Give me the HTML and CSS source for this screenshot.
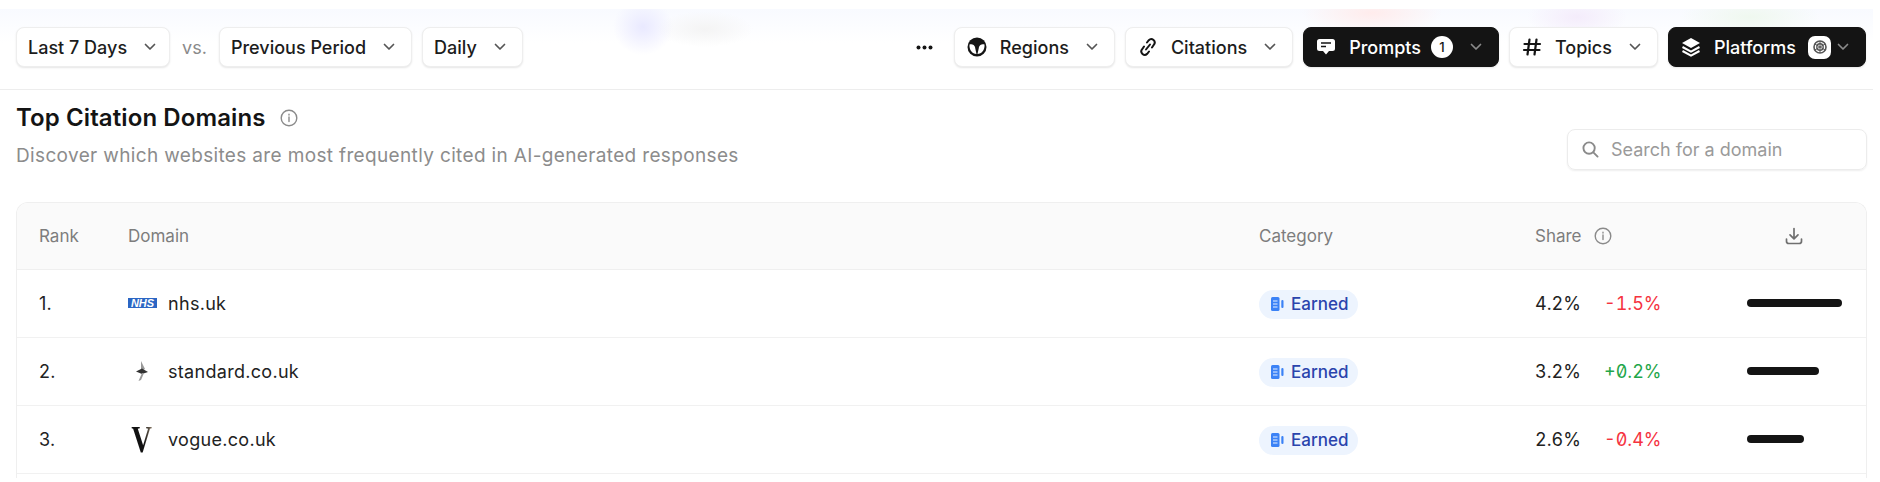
FILE: index.html
```html
<!DOCTYPE html>
<html lang="en">
<head>
  <meta charset="UTF-8">
  <title>Top Citation Domains</title>
  <link rel="stylesheet" href="styles.css">
</head>
<body>
  <div class="toolbar">
    <div class="filters">
      <button class="btn btn-range">Last 7 Days <svg class="chev" viewBox="0 0 12 8"><path d="M1.5 1.5 6 6l4.5-4.5"/></svg></button>
      <span class="vs">vs.</span>
      <button class="btn">Previous Period <svg class="chev" viewBox="0 0 12 8"><path d="M1.5 1.5 6 6l4.5-4.5"/></svg></button>
      <button class="btn">Daily <svg class="chev" viewBox="0 0 12 8"><path d="M1.5 1.5 6 6l4.5-4.5"/></svg></button>
    </div>
    <div class="filters">
      <svg class="dots" viewBox="0 0 17 5"><circle cx="2.5" cy="2.5" r="2"/><circle cx="8.5" cy="2.5" r="2"/><circle cx="14.5" cy="2.5" r="2"/></svg>
      <button class="btn btn-icon">
        <svg class="ico" viewBox="0 0 20 20"><circle cx="10" cy="10" r="9.5" fill="#141414"/><path d="M2.5 7.5C5 6.500 7.500 8 8 10c.4 2 1 5 1.500 7C5.500 17 2 13 2.500 7.500z" fill="#fff"/><path d="M17.500 7.500C15 6.500 12.500 8 12 10c-.4 2-1 5-1.500 7 4 0 7.500-4 7-9.500z" fill="#fff"/></svg>
        Regions <svg class="chev" viewBox="0 0 12 8"><path d="M1.5 1.5 6 6l4.5-4.5"/></svg>
      </button>
      <button class="btn btn-icon">
        <svg class="ico" viewBox="0 0 20 20" fill="none" stroke="#141414" stroke-width="2" stroke-linecap="round"><path d="M9 5.500 10.800 3.200a3.400 3.400 0 0 1 5 4.600L14 10.500"/><path d="M11 14.500 9.200 16.800a3.400 3.400 0 0 1-5-4.600L6 9.500"/><path d="M12 7.500 8 12.500"/></svg>
        Citations <svg class="chev" viewBox="0 0 12 8"><path d="M1.5 1.500 6 6l4.500-4.500"/></svg>
      </button>
      <button class="btn btn-icon btn-dark">
        <svg class="ico" viewBox="0 0 20 20"><path d="M3.500 2h13A2.500 2.500 0 0 1 19 4.500v7a2.500 2.500 0 0 1-2.500 2.500H13l-3 3.500L7 14H3.500A2.500 2.500 0 0 1 1 11.500v-7A2.500 2.500 0 0 1 3.500 2z" fill="#fff"/><path d="M5 6h10M5 9.500h5" stroke="#141414" stroke-width="1.500"/></svg>
        Prompts <span class="count">1</span> <svg class="chev" viewBox="0 0 12 8"><path d="M1.500 1.500 6 6l4.500-4.500"/></svg>
      </button>
      <button class="btn btn-icon">
        <svg class="ico" viewBox="0 0 20 20" stroke="#141414" stroke-width="2.200" stroke-linecap="round"><path d="M7.500 2.500 5.500 17.500M14.500 2.500l-2 15M2.500 7h15.500M2 13h15.500"/></svg>
        Topics <svg class="chev" viewBox="0 0 12 8"><path d="M1.500 1.500 6 6l4.500-4.500"/></svg>
      </button>
      <button class="btn btn-icon btn-dark">
        <svg class="ico" viewBox="0 0 20 20"><path d="M10 1 19 6l-9 5-9-5z" fill="#fff"/><path d="m1.500 10 8.500 4.700 8.500-4.700M1.500 14l8.500 4.700 8.500-4.700" fill="none" stroke="#fff" stroke-width="2"/></svg>
        Platforms
        <span class="logo-chip"><svg viewBox="0 0 16 16" fill="none" stroke="#555" stroke-width="1.600"><circle cx="8" cy="8" r="6"/><circle cx="8" cy="8" r="3.200" stroke-width="1.400"/><path d="M8 2v12M2.800 5l10.400 6M2.800 11l10.400-6" stroke-width="1"/></svg></span>
        <svg class="chev" viewBox="0 0 12 8"><path d="M1.500 1.500 6 6l4.500-4.500"/></svg>
      </button>
    </div>
  </div>

  <main class="content">
    <div class="head">
      <div>
        <h1>Top Citation Domains <svg class="info" viewBox="0 0 18 18"><circle cx="9" cy="9" r="7.800"/><path d="M9 8v4.500M9 5.200v.8"/></svg></h1>
        <p>Discover which websites are most frequently cited in AI-generated responses</p>
      </div>
      <div class="search">
        <svg viewBox="0 0 18 18" fill="none" stroke="#8a8a8a" stroke-width="2" stroke-linecap="round"><circle cx="7.500" cy="7.500" r="6"/><path d="m12 12 4.500 4.500"/></svg>
        Search for a domain
      </div>
    </div>

    <div class="table-wrap">
      <table>
        <colgroup><col class="c-rank"><col><col class="c-cat"><col class="c-share"><col class="c-bar"></colgroup>
        <thead>
          <tr>
            <th>Rank</th>
            <th>Domain</th>
            <th>Category</th>
            <th>Share <svg class="info info-sm" viewBox="0 0 18 18"><circle cx="9" cy="9" r="7.800"/><path d="M9 8v4.500M9 5.200v.8"/></svg></th>
            <th><svg class="dl" viewBox="0 0 18 18" fill="none" stroke="#6f6f6f" stroke-width="1.700" stroke-linecap="round" stroke-linejoin="round"><path d="M9 1.500v10M5 7.800l4 4 4-4M1.500 12v2.200a2.300 2.300 0 0 0 2.300 2.300h10.400a2.300 2.300 0 0 0 2.300-2.300V12"/></svg></th>
          </tr>
        </thead>
        <tbody>
          <tr>
            <td>1.</td>
            <td><div class="domain"><span class="fav"><svg class="nhs" viewBox="0 0 29 10"><rect width="29" height="10" fill="#2b66c4"/><text x="14.500" y="8.800" text-anchor="middle">NHS</text></svg></span>nhs.uk</div></td>
            <td><span class="pill"><svg viewBox="0 0 14 16"><rect x="1" y="1" width="8.500" height="14" rx="1.500" fill="#3b82f6"/><path d="M3 5h4.500M3 8h4.500M3 11h4.500" stroke="#e9f2ff" stroke-width="1.200"/><rect x="11.300" y="4" width="2.200" height="8" rx="1" fill="#3b82f6"/></svg>Earned</span></td>
            <td><div class="share"><span class="pct">4.2%</span><span class="delta down">-1.5%</span></div></td>
            <td><div class="bar" style="width:95px"></div></td>
          </tr>
          <tr>
            <td>2.</td>
            <td><div class="domain"><span class="fav"><svg class="eve" viewBox="0 0 16 22"><path d="M7 1l4 8-4 2z" fill="#999"/><path d="M2 11.500 8 8.500l6 3.500-6 2z" fill="#333"/><path d="M8 13 4.500 21 7 20l3-7z" fill="#999"/></svg></span>standard.co.uk</div></td>
            <td><span class="pill"><svg viewBox="0 0 14 16"><rect x="1" y="1" width="8.500" height="14" rx="1.500" fill="#3b82f6"/><path d="M3 5h4.500M3 8h4.500M3 11h4.500" stroke="#e9f2ff" stroke-width="1.200"/><rect x="11.300" y="4" width="2.200" height="8" rx="1" fill="#3b82f6"/></svg>Earned</span></td>
            <td><div class="share"><span class="pct">3.2%</span><span class="delta up">+0.2%</span></div></td>
            <td><div class="bar" style="width:72px"></div></td>
          </tr>
          <tr>
            <td>3.</td>
            <td><div class="domain"><span class="fav"><span class="vogue">V</span></span>vogue.co.uk</div></td>
            <td><span class="pill"><svg viewBox="0 0 14 16"><rect x="1" y="1" width="8.500" height="14" rx="1.500" fill="#3b82f6"/><path d="M3 5h4.500M3 8h4.500M3 11h4.500" stroke="#e9f2ff" stroke-width="1.200"/><rect x="11.300" y="4" width="2.200" height="8" rx="1" fill="#3b82f6"/></svg>Earned</span></td>
            <td><div class="share"><span class="pct">2.6%</span><span class="delta down">-0.4%</span></div></td>
            <td><div class="bar" style="width:57px"></div></td>
          </tr>
        </tbody>
      </table>
    </div>
  </main>
</body>
</html>
```

FILE: styles.css
```css
* { box-sizing: border-box; }
html, body { height: 100%; }
body { margin: 0; padding-top: 9px; background: #fff; color: #141414; font-family: Inter, "Liberation Sans", sans-serif; overflow: hidden; }

.toolbar {
  height: 81px; width: 1873px; padding: 18px 7px 0 16px;
  display: flex; justify-content: space-between; align-items: flex-start;
  border-bottom: 1px solid #ededed;
  background:
    radial-gradient(ellipse 30px 28px at 643px 18px, #e9e9ff, transparent),
    radial-gradient(ellipse 48px 18px at 705px 20px, #f4f4f4, transparent),
    radial-gradient(ellipse 70px 22px at 1372px 4px, #ffecec, transparent),
    radial-gradient(ellipse 50px 22px at 1577px 8px, #f4ecfb, transparent),
    radial-gradient(ellipse 70px 22px at 1750px 8px, #eff8ef, transparent),
    linear-gradient(#f8faff, #fff 34px);
}
.filters { display: flex; align-items: center; gap: 10px; }
.btn {
  height: 40px; padding: 0 16px 0 11px; display: flex; align-items: center; gap: 17px;
  background: #fff; color: #1c1c1c; border: 1px solid #eeeeee; border-radius: 8px;
  box-shadow: 0 1px 2px rgba(0,0,0,.1);
  font: 500 18px Inter, "Liberation Sans", sans-serif; white-space: nowrap;
}
.btn-range { padding-right: 13px; }
.btn-icon { padding: 0 16px 0 12px; gap: 13px; }
.btn-icon .chev { margin-left: 4px; }
.btn-dark { background: #141414; color: #fff; border-color: #141414; }
.btn-dark .chev { stroke: #8a8a8a; }
.chev { width: 12px; height: 8px; fill: none; stroke: #555; stroke-width: 1.7; stroke-linecap: round; stroke-linejoin: round; flex: none; }
.ico { width: 20px; height: 20px; flex: none; }
.vs { font-size: 18px; color: #8a8a8a; margin: 0 2px; }
.dots { width: 17px; height: 5px; fill: #141414; margin-right: 11px; }
.count { width: 22px; height: 22px; border-radius: 50%; background: #fff; color: #141414; font-size: 13px; display: flex; align-items: center; justify-content: center; margin-left: -3px; }
.logo-chip { width: 23px; height: 23px; border-radius: 7px; background: #fff; display: flex; align-items: center; justify-content: center; margin: 0 -11px 0 -1px; }
.logo-chip svg { width: 16px; height: 16px; }

.content { padding: 0 13px 0 16px; }
.head { display: flex; justify-content: space-between; align-items: flex-start; height: 112px; }
h1 { margin: 14px 0 0; font-size: 24px; line-height: 28px; font-weight: 600; letter-spacing: .1px; color: #141414; display: flex; align-items: center; gap: 14px; }
.head p { margin: 11px 0 0; font-size: 19px; line-height: 26px; color: #8c8c8c; letter-spacing: .35px; }
.info { width: 18px; height: 18px; fill: none; stroke: #8a8a8a; stroke-width: 1.4; stroke-linecap: round; flex: none; }
.search {
  width: 300px; height: 41px; margin-top: 39px; padding-left: 14px; display: flex; align-items: center; gap: 12px;
  border: 1px solid #ececec; border-radius: 8px; box-shadow: 0 1px 2px rgba(0,0,0,.07);
  font-size: 18px; color: #9a9a9a;
}
.search svg { width: 17px; height: 17px; }

.table-wrap { height: 276px; overflow: hidden; border: 1px solid #efefef; border-bottom: 0; border-radius: 12px 12px 0 0; }
table { width: 100%; border-collapse: collapse; table-layout: fixed; font-size: 18px; }
.c-rank { width: 111px; }
.c-cat { width: 276px; }
.c-share { width: 212px; }
.c-bar { width: 119px; }
th { height: 66px; padding: 0; text-align: left; font-weight: 400; font-size: 17px; color: #7d7d7d; background: #fafafa; border-bottom: 1px solid #efefef; }
th:first-child, td:first-child { padding-left: 22px; }
th .info-sm { vertical-align: -3px; margin-left: 8px; }
.dl { width: 18px; height: 18px; display: block; margin-left: 38px; }
td { height: 68px; padding: 0; border-bottom: 1px solid #f1f1f1; color: #222; letter-spacing: .3px; }
.domain { display: flex; align-items: center; }
.fav { width: 40px; flex: none; display: flex; justify-content: flex-start; align-items: center; }
.nhs { width: 29px; height: 10px; display: block; }
.nhs text { font: italic 700 11px "Liberation Sans", sans-serif; fill: #fff; letter-spacing: 0; }
.eve { width: 16px; height: 22px; display: block; margin-left: 6px; }
.vogue {
  font: 700 32px/1 "Liberation Serif", serif; margin-left: 2px; transform: scale(.9, 1.2); letter-spacing: 0;
  background: linear-gradient(90deg, #111 62%, #8a7a66); -webkit-background-clip: text; background-clip: text; color: transparent;
}
.pill { display: inline-flex; vertical-align: middle; align-items: center; gap: 7px; height: 29px; margin-top: 2px; padding: 0 10px 0 11px; border-radius: 15px; background: #edf4fe; color: #2a44ad; font-size: 17px; font-weight: 500; letter-spacing: 0; }
.pill svg { width: 14px; height: 16px; flex: none; }
.share { display: flex; font-feature-settings: "tnum", "zero"; letter-spacing: 0; }
.pct { width: 69px; }
.down { color: #f5333f; }
.up { color: #1fa64a; }
.bar { height: 8px; border-radius: 4px; background: #141414; }
```
